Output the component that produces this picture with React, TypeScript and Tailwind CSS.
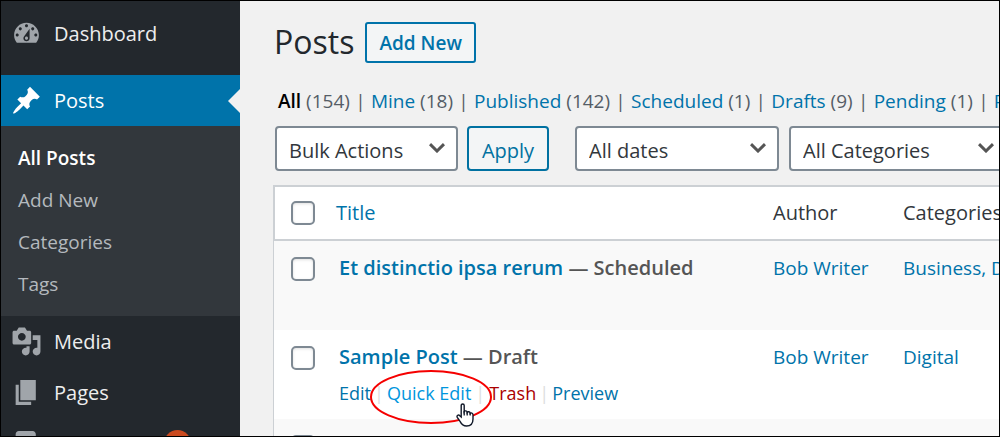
import React from "react";

const ICONS = {
  dashboard:
    "M3.76 16h12.48c1.1-1.37 1.76-3.11 1.76-5 0-4.42-3.58-8-8-8s-8 3.58-8 8c0 1.89.66 3.63 1.76 5zM10 4c.55 0 1 .45 1 1s-.45 1-1 1-1-.45-1-1 .45-1 1-1zM6 6c.55 0 1 .45 1 1s-.45 1-1 1-1-.45-1-1 .45-1 1-1zm8 0c.55 0 1 .45 1 1s-.45 1-1 1-1-.45-1-1 .45-1 1-1zm-5.37 5.55L12 7v6c0 1.1-.9 2-2 2s-2-.9-2-2c0-.57.24-1.08.63-1.45zM4 10c.55 0 1 .45 1 1s-.45 1-1 1-1-.45-1-1 .45-1 1-1zm12 0c.55 0 1 .45 1 1s-.45 1-1 1-1-.45-1-1 .45-1 1-1zm-5 3c0-.55-.45-1-1-1s-1 .45-1 1 .45 1 1 1 1-.45 1-1z",
  posts:
    "M10.44 3.02l1.82-1.82 6.36 6.35-1.83 1.82c-1.05-.68-2.48-.57-3.41.36l-.75.75c-.92.93-1.04 2.35-.35 3.41l-1.83 1.82-2.41-2.41-2.8 2.79c-.42.42-3.38 2.71-3.8 2.29s1.86-3.39 2.28-3.81l2.79-2.79L4.1 9.36l1.83-1.82c1.05.69 2.48.57 3.4-.36l.75-.75c.93-.92 1.05-2.35.36-3.41z",
  media:
    "M13 11V4c0-.55-.45-1-1-1h-1.67L9 1H5L3.67 3H2c-.55 0-1 .45-1 1v7c0 .55.45 1 1 1h10c.55 0 1-.45 1-1zM7 4.5c1.38 0 2.5 1.12 2.5 2.5S8.38 9.5 7 9.5 4.5 8.38 4.5 7 5.62 4.5 7 4.5zM14 6h5v10.5c0 1.38-1.12 2.5-2.5 2.5S14 17.88 14 16.5s1.12-2.5 2.5-2.5c.17 0 .34.02.5.05V9h-3V6zm-4 8.05V13h2v3.5c0 1.38-1.12 2.5-2.5 2.5S7 17.88 7 16.5 8.12 14 9.5 14c.17 0 .34.02.5.05z",
  pages: "M6 15V2h10v13H6zm-1 1h8v2H3V5h2v11z",
  comments:
    "M5 2h9c1.1 0 2 .9 2 2v7c0 1.1-.9 2-2 2h-2l-5 5v-5H5c-1.1 0-2-.9-2-2V4c0-1.1.9-2 2-2z",
};

function MenuItem({ icon, label, active = false, badge }: {
  icon: keyof typeof ICONS;
  label: string;
  active?: boolean;
  badge?: string;
}) {
  return (
    <a
      href="#"
      className={
        active
          ? "relative flex h-[51px] items-center gap-3 bg-[#0073aa] pl-2.5 text-white"
          : "relative flex h-[51px] items-center gap-3 pl-2.5 text-[#eeeeee]"
      }
    >
      <svg
        viewBox="0 0 20 20"
        aria-hidden="true"
        className={active ? "size-[31px] fill-white" : "size-[31px] fill-[#a0a5aa]"}
      >
        <path d={ICONS[icon]} />
      </svg>
      <span>{label}</span>
      {badge && (
        <span className="-ml-1 flex size-[27px] items-center justify-center rounded-full bg-[#ca4a1f] text-sm text-white">
          {badge}
        </span>
      )}
      {active && (
        <span className="absolute right-0 top-1/2 -translate-y-1/2 border-y-12 border-r-12 border-y-transparent border-r-[#f1f1f1]" />
      )}
    </a>
  );
}

function Sidebar() {
  return (
    <nav aria-label="Main menu" className="w-[239px] shrink-0 bg-[#23282d] pt-[7px]">
      <MenuItem icon="dashboard" label="Dashboard" />
      <div className="h-4" />
      <MenuItem icon="posts" label="Posts" active />
      <ul className="bg-[#32373c] py-[11px] text-[19px] text-[#b4b9be]">
        {["All Posts", "Add New", "Categories", "Tags"].map((t, i) => (
          <li key={t}>
            <a
              href="#"
              className={
                i === 0
                  ? "flex h-[42px] items-center pl-[17px] font-semibold text-white"
                  : "flex h-[42px] items-center pl-[17px]"
              }
            >
              {t}
            </a>
          </li>
        ))}
      </ul>
      <MenuItem icon="media" label="Media" />
      <MenuItem icon="pages" label="Pages" />
      <MenuItem icon="comments" label="Comments" badge="5" />
    </nav>
  );
}

const VIEWS: [string, number][] = [
  ["All", 154],
  ["Mine", 18],
  ["Published", 142],
  ["Scheduled", 1],
  ["Drafts", 9],
  ["Pending", 1],
  ["Private", 1],
];

function Views() {
  return (
    <ul className="flex whitespace-nowrap pl-[5px] text-[19px] leading-6 text-[#555d66]">
      {VIEWS.map(([name, count], i) => (
        <li key={name} className="flex">
          {i > 0 && <span className="w-[21px] text-center">|</span>}
          <a href="#" className={i === 0 ? "font-semibold text-black" : "text-[#0073aa]"}>
            {name} <span className="font-normal text-[#555d66]">({count})</span>
          </a>
        </li>
      ))}
    </ul>
  );
}

function Filter({ label, option, width }: { label: string; option: string; width: string }) {
  return (
    <label className={`relative shrink-0 ${width}`}>
      <span className="sr-only">{label}</span>
      <select className="h-[45px] w-full appearance-none rounded-[4px] border-2 border-[#7e8993] bg-white pl-3 pt-1 text-[#32373c]">
        <option>{option}</option>
      </select>
      <svg
        viewBox="0 0 16 10"
        aria-hidden="true"
        className="pointer-events-none absolute right-[13px] top-[17px] h-2.5 w-4 fill-none stroke-[#555555] stroke-[3]"
      >
        <path d="M1 1.2 8 8l7-6.8" />
      </svg>
    </label>
  );
}

function Check({ label }: { label: string }) {
  return (
    <input
      type="checkbox"
      aria-label={label}
      className="block size-6 appearance-none rounded-[5px] border-2 border-[#7e8993] bg-white shadow-[inset_0_1px_3px_rgba(0,0,0,0.12)]"
    />
  );
}

function Row({ title, state, cats, striped, children }: {
  title: string;
  state: string;
  cats: string;
  striped?: boolean;
  children?: React.ReactNode;
}) {
  return (
    <tr className={striped ? "h-[89px] bg-[#f9f9f9] align-top" : "h-[89px] bg-white align-top"}>
      <td className="pl-[17px] pt-4">
        <Check label={`Select ${title}`} />
      </td>
      <td className="pl-[3px] pt-[13px]">
        <strong className="block font-semibold leading-7 text-[#555555]">
          <a href="#" className="text-[#0073aa]">{title}</a> — {state}
        </strong>
        {children}
      </td>
      <td className="pt-[13px] text-[19px] leading-7">
        <a href="#" className="text-[#0073aa]">Bob Writer</a>
      </td>
      <td className="whitespace-nowrap pt-[13px] text-[19px] leading-7">
        <a href="#" className="text-[#0073aa]">{cats}</a>
      </td>
    </tr>
  );
}

function PostsTable() {
  return (
    <table className="w-full min-w-[860px] table-fixed border-separate border-spacing-0 border-l border-[#ccd0d4]">
      <colgroup>
        <col className="w-[62px]" />
        <col className="w-[437px]" />
        <col className="w-[130px]" />
        <col />
      </colgroup>
      <thead className="text-left text-[#32373c]">
        <tr className="h-14 bg-white">
          <th className="border-y-2 border-l border-[#ccd0d4] pl-4">
            <Check label="Select all" />
          </th>
          <th className="border-y-2 border-[#ccd0d4] font-normal">
            <a href="#" className="text-[#0073aa]">Title</a>
          </th>
          <th className="border-y-2 border-[#ccd0d4] font-normal">Author</th>
          <th className="border-y-2 border-[#ccd0d4] font-normal">Categories</th>
        </tr>
      </thead>
      <tbody>
        <Row title="Et distinctio ipsa rerum" state="Scheduled" cats="Business, Design" striped />
        <Row title="Sample Post" state="Draft" cats="Digital">
          <div className="relative flex w-max pt-2 text-[18px] leading-7 text-[#0073aa]">
            <a href="#">Edit</a>
            <span className="w-4 text-center text-[#dddddd]">|</span>
            <a href="#" className="text-[#0096dd]">Quick Edit</a>
            <span className="w-[18px] text-center text-[#dddddd]">|</span>
            <a href="#" className="text-[#aa0000]">Trash</a>
            <span className="w-4 text-center text-[#dddddd]">|</span>
            <a href="#">Preview</a>
            <svg
              viewBox="0 0 124 56"
              aria-hidden="true"
              className="pointer-events-none absolute -top-0.5 left-[30px] h-14 w-[124px] fill-none"
            >
              <ellipse cx="62" cy="28" rx="60" ry="26" className="stroke-[#f50000] stroke-2" />
            </svg>
            <svg
              viewBox="0 0 19 25"
              aria-hidden="true"
              className="pointer-events-none absolute left-[117px] top-8 h-[25px] w-[19px]"
            >
              <path
                d="M5.200 14V2.600c0-2.200 3-2.200 3 0V8.500c.6-1 2.900-.8 3 .8.600-1 2.900-.7 3 1 .8-.8 2.800-.4 2.800 1.500V16c0 4.500-2 7-6.500 7-3.600 0-5-1.700-6.300-4.400L1.300 14.400c-1-2 1.200-3.200 2.500-1.700z"
                className="fill-white stroke-[#101828] stroke-[1.4]"
              />
              <path d="M8.200 8v4.500M11.200 9v3.500M14.200 10v2.500" className="stroke-[#101828] stroke-[1.3]" />
            </svg>
          </div>
        </Row>
        <Row title="Third Post" state="Draft" cats="Digital" striped />
      </tbody>
    </table>
  );
}

export default function App() {
  return (
    <div className="flex h-screen overflow-hidden border border-black bg-[#f1f1f1] font-['Open_Sans','Noto_Sans',sans-serif] text-[20px] leading-7">
      <Sidebar />
      <main className="min-w-0 flex-1 overflow-hidden pl-[33px] pt-5">
        <header className="flex items-center gap-[11px]">
          <h1 className="pl-px text-[32px] leading-[42px] text-[#23282d]">Posts</h1>
          <button className="h-[41px] rounded-[3px] border-2 border-[#0073aa] bg-[#f3f5f6] px-3 pt-0.5 text-[19px] font-semibold text-[#0073aa]">
            Add New
          </button>
        </header>
        <div className="pt-[26px]">
          <Views />
        </div>
        <div className="flex pb-3.5 pl-0.5 pt-[13px]">
          <Filter label="Bulk action" option="Bulk Actions" width="w-[183px]" />
          <button className="ml-[9px] mr-[26px] h-[45px] w-[82px] shrink-0 rounded-[4px] border-2 border-[#0071a1] bg-[#f3f5f6] pt-1 text-[#0071a1]">
            Apply
          </button>
          <Filter label="Date" option="All dates" width="w-[204px]" />
          <div className="w-2.5 shrink-0" />
          <Filter label="Category" option="All Categories" width="w-[218px]" />
        </div>
        <PostsTable />
      </main>
    </div>
  );
}
